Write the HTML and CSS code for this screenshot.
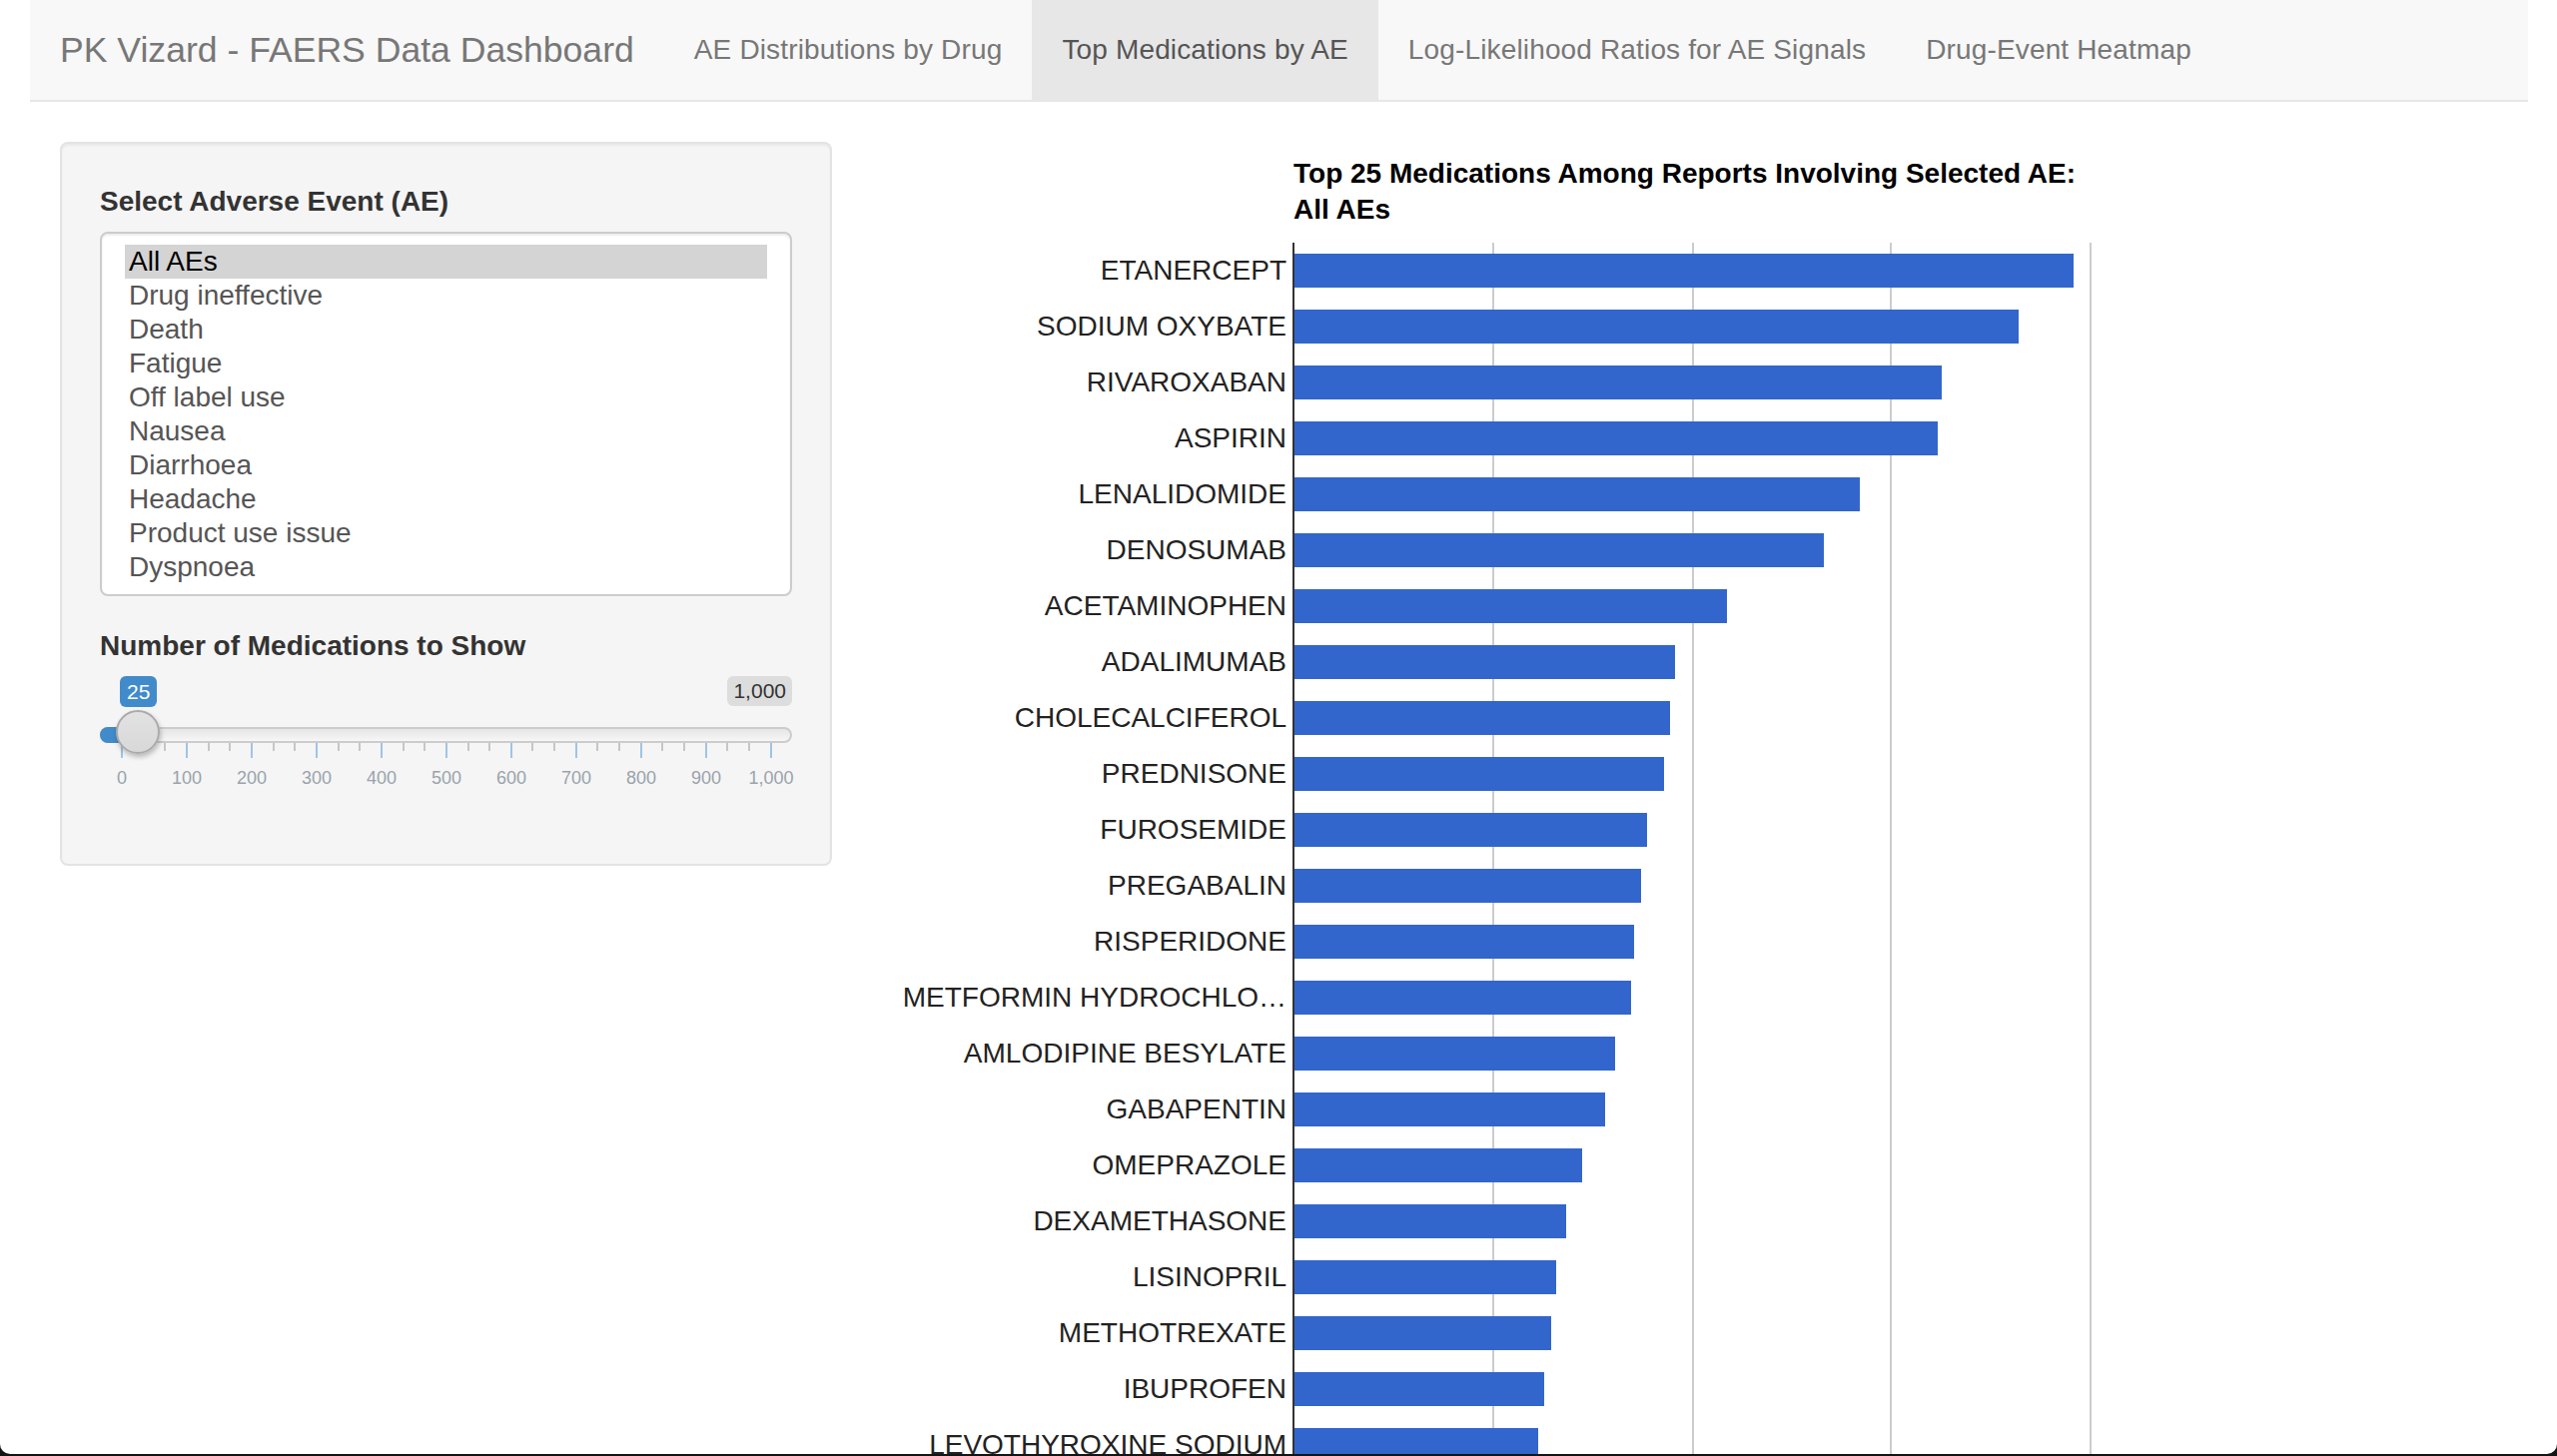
FILE: index.html
```html
<!DOCTYPE html>
<html lang="en">
<head>
<meta charset="utf-8">
<title>PK Vizard - FAERS Data Dashboard</title>
<link rel="stylesheet" href="styles.css">
</head>
<body>
<nav class="navbar">
  <div class="brand">PK Vizard - FAERS Data Dashboard</div>
  <ul class="tabs">
    <li class="tab">AE Distributions by Drug</li>
    <li class="tab active">Top Medications by AE</li>
    <li class="tab">Log-Likelihood Ratios for AE Signals</li>
    <li class="tab">Drug-Event Heatmap</li>
  </ul>
</nav>

<main class="page">
  <aside class="well">
    <div class="form-group">
      <label class="ctrl-label">Select Adverse Event (AE)</label>
      <div class="ae-list" role="listbox">
        <div class="ae-option selected">All AEs</div>
        <div class="ae-option">Drug ineffective</div>
        <div class="ae-option">Death</div>
        <div class="ae-option">Fatigue</div>
        <div class="ae-option">Off label use</div>
        <div class="ae-option">Nausea</div>
        <div class="ae-option">Diarrhoea</div>
        <div class="ae-option">Headache</div>
        <div class="ae-option">Product use issue</div>
        <div class="ae-option">Dyspnoea</div>
      </div>
    </div>
    <div class="form-group">
      <label class="ctrl-label">Number of Medications to Show</label>
      <div class="irs">
        <div class="irs-labels">
          <span class="irs-single">25</span>
          <span class="irs-max">1,000</span>
        </div>
        <div class="irs-track">
          <span class="irs-bar"></span>
          <span class="irs-handle"></span>
        </div>
        <div class="irs-ticks">
          <i class="pol big"></i><i class="pol"></i><i class="pol"></i>
          <i class="pol big"></i><i class="pol"></i><i class="pol"></i>
          <i class="pol big"></i><i class="pol"></i><i class="pol"></i>
          <i class="pol big"></i><i class="pol"></i><i class="pol"></i>
          <i class="pol big"></i><i class="pol"></i><i class="pol"></i>
          <i class="pol big"></i><i class="pol"></i><i class="pol"></i>
          <i class="pol big"></i><i class="pol"></i><i class="pol"></i>
          <i class="pol big"></i><i class="pol"></i><i class="pol"></i>
          <i class="pol big"></i><i class="pol"></i><i class="pol"></i>
          <i class="pol big"></i><i class="pol"></i><i class="pol"></i>
          <i class="pol big"></i>
        </div>
        <div class="irs-nums">
          <span>0</span><span>100</span><span>200</span><span>300</span><span>400</span><span>500</span><span>600</span><span>700</span><span>800</span><span>900</span><span>1,000</span>
        </div>
      </div>
    </div>
  </aside>

  <section class="chart">
    <h2 class="chart-title">Top 25 Medications Among Reports Involving Selected AE:<br>All AEs</h2>
    <div class="plot">
      <div class="labels">
        <div class="label">ETANERCEPT</div>
        <div class="label">SODIUM OXYBATE</div>
        <div class="label">RIVAROXABAN</div>
        <div class="label">ASPIRIN</div>
        <div class="label">LENALIDOMIDE</div>
        <div class="label">DENOSUMAB</div>
        <div class="label">ACETAMINOPHEN</div>
        <div class="label">ADALIMUMAB</div>
        <div class="label">CHOLECALCIFEROL</div>
        <div class="label">PREDNISONE</div>
        <div class="label">FUROSEMIDE</div>
        <div class="label">PREGABALIN</div>
        <div class="label">RISPERIDONE</div>
        <div class="label">METFORMIN HYDROCHLO…</div>
        <div class="label">AMLODIPINE BESYLATE</div>
        <div class="label">GABAPENTIN</div>
        <div class="label">OMEPRAZOLE</div>
        <div class="label">DEXAMETHASONE</div>
        <div class="label">LISINOPRIL</div>
        <div class="label">METHOTREXATE</div>
        <div class="label">IBUPROFEN</div>
        <div class="label">LEVOTHYROXINE SODIUM</div>
        <div class="label">PANTOPRAZOLE</div>
        <div class="label">ATORVASTATIN</div>
        <div class="label">SIMVASTATIN</div>
      </div>
      <div class="bars">
        <div class="row"><div class="bar" style="width:780px"></div></div>
        <div class="row"><div class="bar" style="width:725px"></div></div>
        <div class="row"><div class="bar" style="width:648px"></div></div>
        <div class="row"><div class="bar" style="width:644px"></div></div>
        <div class="row"><div class="bar" style="width:566px"></div></div>
        <div class="row"><div class="bar" style="width:530px"></div></div>
        <div class="row"><div class="bar" style="width:433px"></div></div>
        <div class="row"><div class="bar" style="width:381px"></div></div>
        <div class="row"><div class="bar" style="width:376px"></div></div>
        <div class="row"><div class="bar" style="width:370px"></div></div>
        <div class="row"><div class="bar" style="width:353px"></div></div>
        <div class="row"><div class="bar" style="width:347px"></div></div>
        <div class="row"><div class="bar" style="width:340px"></div></div>
        <div class="row"><div class="bar" style="width:337px"></div></div>
        <div class="row"><div class="bar" style="width:321px"></div></div>
        <div class="row"><div class="bar" style="width:311px"></div></div>
        <div class="row"><div class="bar" style="width:288px"></div></div>
        <div class="row"><div class="bar" style="width:272px"></div></div>
        <div class="row"><div class="bar" style="width:262px"></div></div>
        <div class="row"><div class="bar" style="width:257px"></div></div>
        <div class="row"><div class="bar" style="width:250px"></div></div>
        <div class="row"><div class="bar" style="width:244px"></div></div>
        <div class="row"><div class="bar" style="width:238px"></div></div>
        <div class="row"><div class="bar" style="width:233px"></div></div>
        <div class="row"><div class="bar" style="width:228px"></div></div>
      </div>
    </div>
  </section>
</main>
</body>
</html>
```

FILE: styles.css
```css
html {
  height: 1458px;
  overflow: hidden;
  background: #151515;
}

body {
  margin: 0;
  height: 1456px;
  overflow: hidden;
  background: #ffffff;
  border-radius: 0 0 10px 10px;
  font-family: "Liberation Sans", Arial, Helvetica, sans-serif;
  color: #333333;
}

/* ---------- navbar ---------- */
.navbar {
  display: flex;
  align-items: stretch;
  height: 100px;
  margin: 0 29px 40px 30px;
  background: #f8f8f8;
  border-bottom: 2px solid #e7e7e7;
}

.brand {
  padding: 0 30px;
  font-size: 35.6px;
  line-height: 100px;
  color: #777777;
  white-space: nowrap;
}

.tabs {
  display: flex;
  margin: 0;
  padding: 0;
  list-style: none;
}

.tab {
  padding: 0 30px;
  font-size: 28px;
  letter-spacing: 0.15px;
  line-height: 100px;
  color: #777777;
  white-space: nowrap;
}

.tab.active {
  background: #e7e7e7;
  color: #555555;
}

/* ---------- page ---------- */
.page {
  display: flex;
  align-items: flex-start;
  gap: 60px;
  padding-left: 60px;
}

.well {
  flex: 0 0 773px;
  min-width: 0;
  box-sizing: border-box;
  padding: 38px;
  background: #f5f5f5;
  border: 2px solid #e3e3e3;
  border-radius: 8px;
  box-shadow: inset 0 2px 2px rgba(0, 0, 0, 0.05);
}

.form-group {
  margin-bottom: 30px;
}

.ctrl-label {
  display: block;
  margin-bottom: 10px;
  font-size: 28px;
  line-height: 40px;
  font-weight: bold;
  color: #333333;
}

.ae-list {
  height: 365px;
  box-sizing: border-box;
  padding: 11px 23px;
  background: #ffffff;
  border: 2px solid #cccccc;
  border-radius: 8px;
  box-shadow: inset 0 2px 2px rgba(0, 0, 0, 0.075);
}

.ae-option {
  height: 34px;
  padding-left: 4px;
  font-size: 28px;
  line-height: 34px;
  color: #555555;
  white-space: nowrap;
}

.ae-option.selected {
  background: #d4d4d4;
  color: #000000;
}

/* ---------- slider ---------- */
.irs {
  height: 120px;
}

.irs-labels {
  display: flex;
  justify-content: space-between;
  align-items: flex-start;
  height: 31px;
  margin-top: 1px;
}

.irs-single {
  margin-left: 20px;
  padding: 0 7px;
  font-size: 21px;
  line-height: 31px;
  color: #ffffff;
  background: #428bca;
  border-radius: 6px;
}

.irs-max {
  padding: 0 6px;
  font-size: 21px;
  line-height: 30px;
  color: #333333;
  background: #dddddd;
  border-radius: 6px;
}

.irs-track {
  position: relative;
  height: 16px;
  box-sizing: border-box;
  margin-top: 20px;
  border: 2px solid #cccccc;
  border-radius: 16px;
  background: linear-gradient(to bottom, #dddddd -50%, #ffffff 150%);
}

.irs-bar {
  position: absolute;
  left: -2px;
  top: -2px;
  width: 40px;
  height: 16px;
  background: #428bca;
  border-radius: 8px 0 0 8px;
}

.irs-handle {
  position: absolute;
  left: 14px;
  top: -19px;
  width: 44px;
  height: 44px;
  box-sizing: border-box;
  border: 2px solid #aaaaaa;
  border-radius: 50%;
  background: linear-gradient(to bottom, #e2e2e2, #d8d8d8);
  box-shadow: 1px 3px 5px rgba(0, 0, 0, 0.25);
}

.irs-ticks {
  display: flex;
  justify-content: space-between;
  align-items: flex-start;
  height: 15px;
  margin: 0 20px 0 21px;
}

.pol {
  display: block;
  width: 2px;
  height: 8px;
  background: #c6c6c6;
}

.pol.big {
  height: 15px;
  background: #a0c4e4;
}

.irs-nums {
  display: flex;
  justify-content: space-between;
  margin: 10px -9px 0 -8px;
}

.irs-nums span {
  width: 60px;
  text-align: center;
  font-size: 18px;
  line-height: 20px;
  color: #9aa3ab;
}

/* ---------- chart ---------- */
.chart {
  flex: 1;
  min-width: 0;
}

.chart-title {
  margin: 14px 0 0 0;
  padding-left: 402px;
  font-size: 28px;
  line-height: 36px;
  font-weight: bold;
  color: #000000;
}

.plot {
  display: flex;
  margin-top: 15px;
}

.labels {
  width: 395px;
  padding-right: 6px;
  text-align: right;
}

.label {
  height: 56px;
  font-size: 28px;
  line-height: 56px;
  color: #222222;
  white-space: nowrap;
}

.bars {
  width: 800px;
  border-left: 2px solid #333333;
  background-image:
    linear-gradient(#cccccc, #cccccc),
    linear-gradient(#cccccc, #cccccc),
    linear-gradient(#cccccc, #cccccc),
    linear-gradient(#cccccc, #cccccc);
  background-size: 2px 100%;
  background-repeat: no-repeat;
  background-position: 198px 0, 398px 0, 596px 0, 796px 0;
}

.row {
  height: 56px;
  display: flex;
  align-items: center;
}

.bar {
  height: 34px;
  background: #3366cc;
}
```
